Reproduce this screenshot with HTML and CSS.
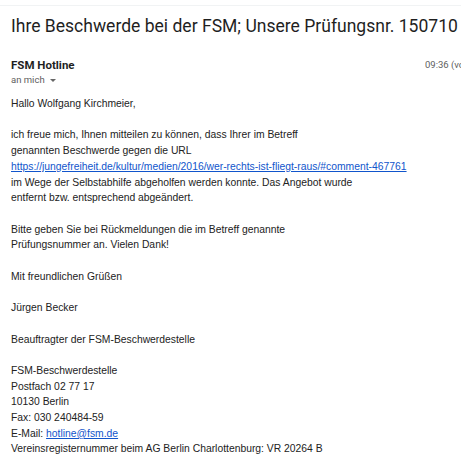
FILE: index.html
```html
<!DOCTYPE html>
<html lang="de">
<head>
  <meta charset="UTF-8" />
  <meta name="viewport" content="width=device-width, initial-scale=1" />
  <title>Ihre Beschwerde bei der FSM</title>
  <link rel="stylesheet" href="styles.css">
</head>
<body>
  <div class="topbar"></div>

  <h2 class="subject">Ihre Beschwerde bei der FSM; Unsere Prüfungsnr. 150710</h2>

  <div class="sender">
    <div class="sender-info">
      <span class="sender-name">FSM Hotline</span>
      <span class="recipient">an mich <span class="caret"></span></span>
    </div>
    <span class="time">09:36 (vor 1 Stunde)</span>
  </div>

  <div class="message">
    Hallo Wolfgang Kirchmeier,<br>
    <br>
    ich freue mich, Ihnen mitteilen zu können, dass Ihrer im Betreff<br>
    genannten Beschwerde gegen die URL<br>
    <a href="https://jungefreiheit.de/kultur/medien/2016/wer-rechts-ist-fliegt-raus/#comment-467761">https://jungefreiheit.de/kultur/medien/2016/wer-rechts-ist-fliegt-raus/#comment-467761</a><br>
    im Wege der Selbstabhilfe abgeholfen werden konnte. Das Angebot wurde<br>
    entfernt bzw. entsprechend abgeändert.<br>
    <br>
    Bitte geben Sie bei Rückmeldungen die im Betreff genannte<br>
    Prüfungsnummer an. Vielen Dank!<br>
    <br>
    Mit freundlichen Grüßen<br>
    <br>
    Jürgen Becker<br>
    <br>
    Beauftragter der FSM-Beschwerdestelle<br>
    <br>
    FSM-Beschwerdestelle<br>
    Postfach 02 77 17<br>
    10130 Berlin<br>
    Fax: 030 240484-59<br>
    E-Mail: <a href="mailto:hotline@fsm.de">hotline@fsm.de</a><br>
    Vereinsregisternummer beim AG Berlin Charlottenburg: VR 20264 B
  </div>
</body>
</html>
```

FILE: styles.css
```css
* { box-sizing: border-box; }

body {
  margin: 0;
  background: #fff;
  color: #222;
  font-family: Arial, "Liberation Sans", sans-serif;
  overflow: hidden;
}

.topbar {
  height: 6px;
  border-bottom: 1px solid #f1f3f4;
}

.subject {
  margin: 0;
  padding: 7px 0 0 11px;
  font-family: Roboto, "Open Sans", sans-serif;
  font-size: 17.55px;
  font-weight: 400;
  line-height: 26px;
  color: #1f1f1f;
  white-space: nowrap;
}

.sender {
  display: flex;
  justify-content: space-between;
  padding: 19px 0 0 11px;
}

.sender-info {
  display: flex;
  flex-direction: column;
}

.sender-name {
  font-family: Roboto, Arial, sans-serif;
  font-size: 11.5px;
  font-weight: 700;
  line-height: 14px;
  color: #1f1f1f;
}

.recipient {
  font-family: Roboto, Arial, sans-serif;
  font-size: 9.5px;
  line-height: 16px;
  color: #5e5e5e;
}

.caret {
  display: inline-block;
  margin-left: 3px;
  vertical-align: middle;
  border-left: 3px solid transparent;
  border-right: 3px solid transparent;
  border-top: 3px solid #666;
}

.time {
  flex: none;
  width: 36px;
  overflow: hidden;
  white-space: nowrap;
  font-family: Roboto, Arial, sans-serif;
  font-size: 9.5px;
  line-height: 14px;
  color: #5e5e5e;
}

.message {
  padding: 8px 0 0 11px;
  font-size: 10.35px;
  line-height: 15.7px;
  color: #222;
  white-space: nowrap;
}

.message a {
  color: #1155cc;
}
```
